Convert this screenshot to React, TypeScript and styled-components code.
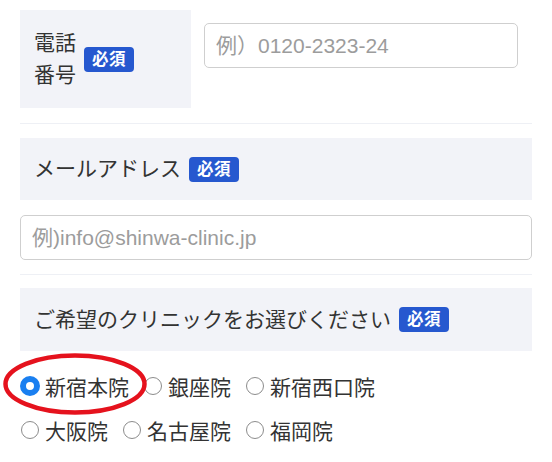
import React from "react";
import styled, { createGlobalStyle } from "styled-components";

const Global = createGlobalStyle`
  html, body { margin: 0; padding: 0; background: #ffffff; }
  body {
    font-family: "Liberation Sans", "Noto Sans CJK JP", sans-serif;
    color: #333333;
  }
  * { box-sizing: border-box; }
`;

const Page = styled.div`
  width: 552px;
  height: 462px;
  padding: 10px 20px 0 20px;
  overflow: hidden;
`;

const Group = styled.div<{ $last?: boolean }>`
  padding-bottom: ${(p) => (p.$last ? "0" : "14px")};
  margin-bottom: ${(p) => (p.$last ? "0" : "13px")};
  border-bottom: ${(p) => (p.$last ? "none" : "1px solid #eef0f5")};
`;

const InlineGroup = styled(Group)`
  display: flex;
  align-items: flex-start;
  padding-bottom: 15px;
  margin-bottom: 14px;
`;

const LabelCell = styled.div<{ $width?: number; $height?: number }>`
  background: #f2f3f8;
  display: flex;
  align-items: center;
  padding: 0 14px;
  font-size: 21px;
  line-height: 32px;
  ${(p) =>
    p.$width
      ? `width: ${p.$width}px; flex: none; padding-top: 17px; padding-bottom: 17px;`
      : `height: ${p.$height ?? 62}px;`}
`;

const LabelText = styled.span`
  display: block;
  white-space: nowrap;
`;

const Badge = styled.span`
  display: inline-block;
  flex: none;
  margin-left: 8px;
  height: 25px;
  line-height: 25px;
  padding: 0 8px;
  border-radius: 4px;
  background: #2658cf;
  color: #ffffff;
  font-size: 16.5px;
  font-weight: 700;
  letter-spacing: 0.5px;
`;

const InputWrap = styled.div`
  flex: 1;
  padding: 13px 14px 0 13px;
`;

const TextInput = styled.input`
  display: block;
  width: 100%;
  height: 45px;
  border: 1.5px solid #cfcfcf;
  border-radius: 5px;
  background: #ffffff;
  padding: 0 11px;
  font-family: "Liberation Sans", "Noto Sans CJK JP", sans-serif;
  font-size: 21px;
  color: #333;
  outline: none;
  &::placeholder { color: #9c9c9c; }
`;

const Spacer = styled.div<{ $h: number }>`
  height: ${(p) => p.$h}px;
`;

const Radios = styled.div`
  position: relative;
  margin-top: 13px;
`;

const RadioRow = styled.div`
  display: flex;
  align-items: center;
  height: 44px;
  gap: 14px;
`;

const RadioItem = styled.label`
  display: flex;
  align-items: center;
  font-size: 21px;
  color: #333;
  white-space: nowrap;
`;

const Dot = styled.span<{ $checked?: boolean }>`
  display: block;
  flex: none;
  border-radius: 50%;
  background: #ffffff;
  ${(p) =>
    p.$checked
      ? `width: 20px; height: 20px; border: 6px solid #1a7ff0; margin-right: 5px;`
      : `width: 18px; height: 18px; border: 1.6px solid #8c8c8c; margin: 0 6px 0 1px;`}
`;

const Circle = styled.svg`
  position: absolute;
  left: -17px;
  top: -11px;
  pointer-events: none;
`;

type Clinic = { name: string; checked?: boolean };

const rows: Clinic[][] = [
  [{ name: "新宿本院", checked: true }, { name: "銀座院" }, { name: "新宿西口院" }],
  [{ name: "大阪院" }, { name: "名古屋院" }, { name: "福岡院" }],
];

export default function App() {
  return (
    <Page>
      <Global />
      <InlineGroup>
        <LabelCell $width={171}>
          <div>
            <LabelText>電話</LabelText>
            <LabelText>番号</LabelText>
          </div>
          <Badge>必須</Badge>
        </LabelCell>
        <InputWrap>
          <TextInput type="tel" placeholder="例）0120-2323-24" />
        </InputWrap>
      </InlineGroup>

      <Group>
        <LabelCell>
          <LabelText>メールアドレス</LabelText>
          <Badge>必須</Badge>
        </LabelCell>
        <Spacer $h={15} />
        <TextInput type="email" placeholder="例)info@shinwa-clinic.jp" />
      </Group>

      <Group $last>
        <LabelCell $height={63}>
          <LabelText>ご希望のクリニックをお選びください</LabelText>
          <Badge>必須</Badge>
        </LabelCell>
        <Radios>
          {rows.map((row, i) => (
            <RadioRow key={i}>
              {row.map((r) => (
                <RadioItem key={r.name}>
                  <Dot $checked={r.checked} />
                  {r.name}
                </RadioItem>
              ))}
            </RadioRow>
          ))}
          <Circle width="146" height="64" viewBox="0 0 146 64">
            <ellipse
              cx="72"
              cy="31"
              rx="69.5"
              ry="28.5"
              fill="none"
              stroke="#e5121d"
              strokeWidth="4.5"
            />
          </Circle>
        </Radios>
      </Group>
    </Page>
  );
}
